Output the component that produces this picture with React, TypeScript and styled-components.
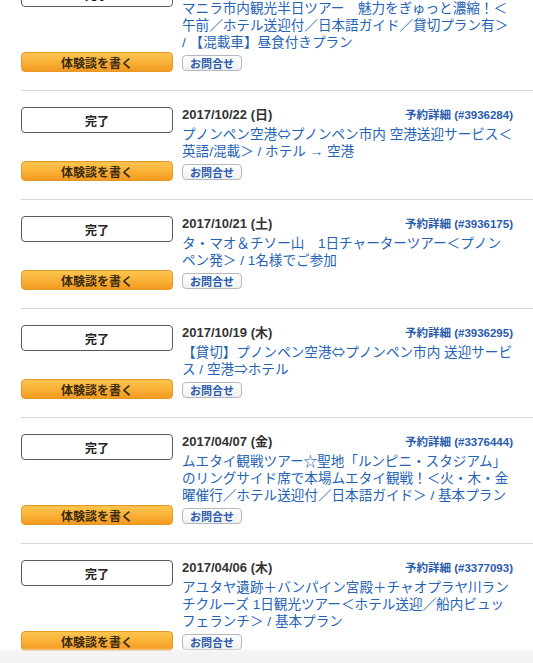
import React from "react";
import styled, { createGlobalStyle } from "styled-components";

const Global = createGlobalStyle`
  html, body { margin: 0; padding: 0; background: #fff; }
  body { font-family: "Liberation Sans", "Noto Sans CJK JP", sans-serif; overflow: hidden; }
`;

const List = styled.div`
  margin-top: -35px;
  margin-left: 21px;
`;

const Card = styled.div`
  display: flex;
  align-items: stretch;
  padding: 16px 20px 18px 0;
  border-bottom: 1px solid #d6d6d6;
`;

const LeftCol = styled.div`
  width: 152px;
  flex: none;
  display: flex;
  flex-direction: column;
  justify-content: space-between;
`;

const StatusBox = styled.div`
  box-sizing: border-box;
  height: 26px;
  border: 1px solid #5a5a5a;
  border-radius: 4px;
  background: #fff;
  display: flex;
  align-items: center;
  justify-content: center;
  font-size: 12px;
  font-weight: bold;
  color: #222;
`;

const ReviewButton = styled.div`
  box-sizing: border-box;
  height: 20px;
  border: 1px solid #e5982a;
  border-radius: 4px;
  background: linear-gradient(to bottom, #fcc550 0%, #f9b238 50%, #f39a1f 100%);
  display: flex;
  align-items: center;
  justify-content: center;
  font-size: 12px;
  font-weight: bold;
  color: #3a2a12;
`;

const RightCol = styled.div`
  flex: 1;
  padding-left: 9px;
  padding-bottom: 1px;
  display: flex;
  flex-direction: column;
  align-items: flex-start;
`;

const HeadRow = styled.div`
  align-self: stretch;
  display: flex;
  justify-content: space-between;
  align-items: baseline;
  height: 16px;
  line-height: 16px;
`;

const DateText = styled.span`
  font-size: 13px;
  font-weight: bold;
  color: #333;
`;

const DetailLink = styled.a`
  font-size: 11.5px;
  font-weight: bold;
  color: #2a5cad;
  text-decoration: none;
`;

const Title = styled.a`
  display: block;
  margin-top: 3px;
  font-size: 13.6px;
  line-height: 17px;
  color: #2463b4;
  text-decoration: none;
`;

const TitleLine = styled.span`
  display: block;
  height: 17px;
  white-space: nowrap;
`;

const WideSymbol = styled.span`
  font-family: "Noto Sans CJK JP", sans-serif;
  line-height: 0;
`;

const ContactButton = styled.div`
  box-sizing: border-box;
  margin-top: 4px;
  height: 16px;
  padding: 0 7px;
  border: 1px solid #b4b9bf;
  border-radius: 4px;
  background: linear-gradient(to bottom, #ffffff 0%, #f0f0f0 100%);
  display: flex;
  align-items: center;
  font-size: 11px;
  font-weight: bold;
  color: #2a5cad;
`;

const BottomShade = styled.div`
  position: fixed;
  left: 0;
  right: 0;
  bottom: 0;
  height: 15px;
  background: linear-gradient(to bottom, rgba(244,244,244,0) 0%, #f4f4f4 25%, #f3f3f3 100%);
`;

type Item = { date: string; no: string; lines: string[] };

const items: Item[] = [
  {
    date: "2017/10/23 (月)",
    no: "#3936301",
    lines: [
      "マニラ市内観光半日ツアー　魅力をぎゅっと濃縮！＜",
      "午前／ホテル送迎付／日本語ガイド／貸切プラン有＞",
      "/ 【混載車】昼食付きプラン",
    ],
  },
  {
    date: "2017/10/22 (日)",
    no: "#3936284",
    lines: ["プノンペン空港⇔プノンペン市内 空港送迎サービス＜", "英語/混載＞ / ホテル → 空港"],
  },
  {
    date: "2017/10/21 (土)",
    no: "#3936175",
    lines: ["タ・マオ＆チソー山　1日チャーターツアー＜プノン", "ペン発＞ / 1名様でご参加"],
  },
  {
    date: "2017/10/19 (木)",
    no: "#3936295",
    lines: ["【貸切】プノンペン空港⇔プノンペン市内 送迎サービ", "ス / 空港⇒ホテル"],
  },
  {
    date: "2017/04/07 (金)",
    no: "#3376444",
    lines: [
      "ムエタイ観戦ツアー☆聖地「ルンピニ・スタジアム」",
      "のリングサイド席で本場ムエタイ観戦！＜火・木・金",
      "曜催行／ホテル送迎付／日本語ガイド＞ / 基本プラン",
    ],
  },
  {
    date: "2017/04/06 (木)",
    no: "#3377093",
    lines: [
      "アユタヤ遺跡＋バンパイン宮殿＋チャオプラヤ川ラン",
      "チクルーズ 1日観光ツアー＜ホテル送迎／船内ビュッ",
      "フェランチ＞ / 基本プラン",
    ],
  },
];

function renderLine(text: string) {
  return text.split(/([⇔⇒])/).map((part, i) =>
    part === "⇔" || part === "⇒" ? <WideSymbol key={i}>{part}</WideSymbol> : part
  );
}

export default function App() {
  return (
    <>
      <Global />
      <List>
        {items.map((it) => (
          <Card key={it.no}>
            <LeftCol>
              <StatusBox>完了</StatusBox>
              <ReviewButton>体験談を書く</ReviewButton>
            </LeftCol>
            <RightCol>
              <HeadRow>
                <DateText>{it.date}</DateText>
                <DetailLink href="#">予約詳細 ({it.no})</DetailLink>
              </HeadRow>
              <Title href="#">
                {it.lines.map((l, i) => (
                  <TitleLine key={i}>{renderLine(l)}</TitleLine>
                ))}
              </Title>
              <ContactButton>お問合せ</ContactButton>
            </RightCol>
          </Card>
        ))}
      </List>
      <BottomShade />
    </>
  );
}
